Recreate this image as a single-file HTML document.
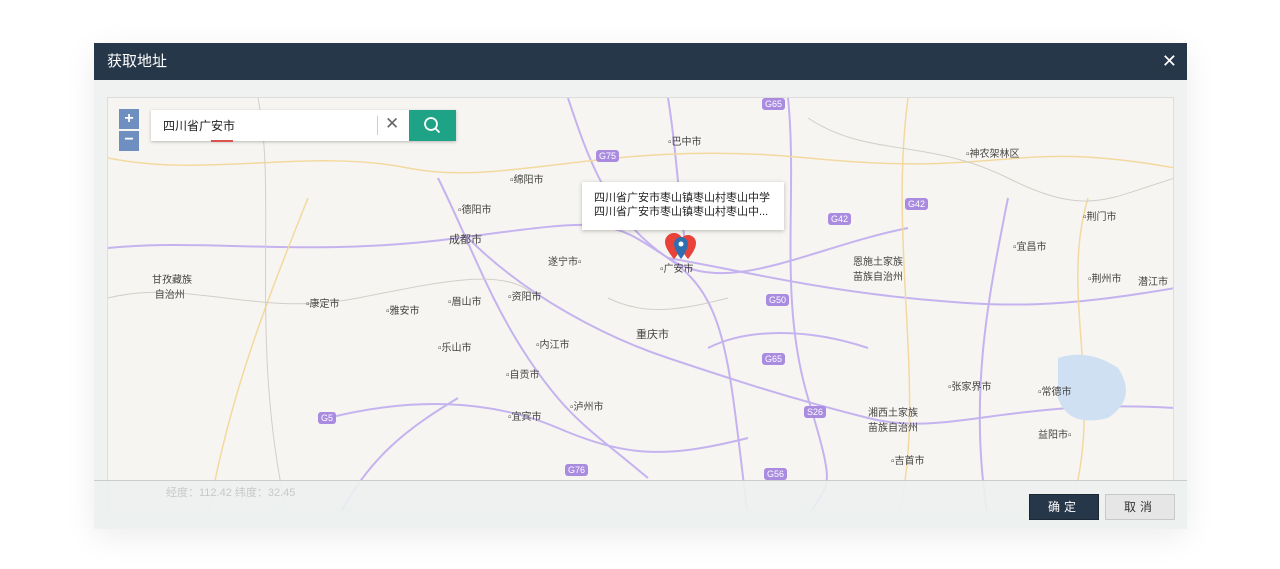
<!DOCTYPE html>
<html><head><meta charset="utf-8"><style>
body{margin:0;width:1280px;height:569px;background:#fff;font-family:"Liberation Sans","Noto Sans CJK SC",sans-serif;position:relative;overflow:hidden}
.dlg{position:absolute;left:94px;top:43px;width:1093px;height:485px;background:#f0f1f1;box-shadow:0 8px 30px rgba(0,0,0,.08)}
.hd{height:37px;background:#27374a;color:#fff;font-size:15px;line-height:37px;padding-left:13px;position:relative}
.x{position:absolute;right:10px;top:0;font-size:18px}
.map{position:absolute;left:13px;top:54px;width:1065px;height:412px;background:#f7f5f1;border:1px solid #ddd;overflow:hidden}
.l{position:absolute;font-size:10px;color:#444;white-space:nowrap}
.g{position:absolute;font-size:9px;color:#fff;background:#a98be0;border-radius:3px;padding:0 3px;line-height:12px}
.ft{position:absolute;left:0;top:437px;width:1093px;height:48px;background:rgba(236,241,239,.9);border-top:1px solid #ccc}
.b{position:absolute;top:13px;height:24px;width:68px;font-size:12px;text-align:center;line-height:24px;letter-spacing:4px}
</style></head><body>
<div class="dlg">
<div class="hd">获取地址<span class="x">✕</span></div>
<div class="map">
<svg width="1067" height="420" style="position:absolute;left:0;top:0" fill="none">
<g stroke="#c5b3ef" stroke-width="2">
<path d="M0 150 C100 140 200 160 350 140 S500 120 560 160 700 150 800 130 1067 120"/>
<path d="M330 80 C360 140 380 200 420 260 S480 330 540 380 560 420"/>
<path d="M460 0 C480 60 500 120 560 160 S620 260 640 420"/>
<path d="M560 160 C620 170 700 190 800 200 S950 210 1067 190"/>
<path d="M360 140 C420 200 500 240 560 260 S680 300 760 320 900 300 1067 310"/>
<path d="M220 320 C300 300 380 300 450 330 S560 360 640 340"/>
<path d="M560 0 C570 60 570 110 580 160"/>
<path d="M680 0 C690 100 670 200 700 300 S720 380 700 420"/>
<path d="M900 100 C880 200 860 300 880 420"/>
<path d="M230 420 C260 360 300 330 350 300"/>
<path d="M600 250 C640 230 700 230 760 250"/>
</g>
<g stroke="#f3d9a0" stroke-width="1.5">
<path d="M0 60 C100 80 200 50 300 70 S500 40 700 60 900 40 1067 70"/>
<path d="M100 420 C120 300 160 200 200 100"/>
<path d="M800 0 C780 150 820 300 790 420"/>
<path d="M980 100 C950 200 1000 300 960 420"/>
</g>
<g stroke="#d2cfca" stroke-width="1">
<path d="M0 200 C80 180 150 220 250 200 S400 170 430 200"/>
<path d="M150 0 C170 100 140 250 180 420"/>
<path d="M700 20 C760 60 820 40 900 80 S1000 100 1067 80"/>
<path d="M500 200 C540 220 580 210 620 200"/>
</g>
<path d="M950 260 q30 -10 60 10 q20 30 -10 50 q-40 10 -50 -20z" fill="#cfe0f3"/>
</svg>
<span class="l" style="left:341px;top:133px;font-size:11px">成都市</span>
<span class="l" style="left:44px;top:173px">甘孜藏族<br>&nbsp;自治州</span>
<span class="l" style="left:198px;top:197px">▫康定市</span>
<span class="l" style="left:278px;top:204px">▫雅安市</span>
<span class="l" style="left:340px;top:195px">▫眉山市</span>
<span class="l" style="left:400px;top:190px">▫资阳市</span>
<span class="l" style="left:330px;top:241px">▫乐山市</span>
<span class="l" style="left:428px;top:238px">▫内江市</span>
<span class="l" style="left:528px;top:228px;font-size:11px">重庆市</span>
<span class="l" style="left:398px;top:268px">▫自贡市</span>
<span class="l" style="left:400px;top:310px">▫宜宾市</span>
<span class="l" style="left:462px;top:300px">▫泸州市</span>
<span class="l" style="left:440px;top:155px">遂宁市▫</span>
<span class="l" style="left:552px;top:162px">▫广安市</span>
<span class="l" style="left:402px;top:73px">▫绵阳市</span>
<span class="l" style="left:350px;top:103px">▫德阳市</span>
<span class="l" style="left:560px;top:35px">▫巴中市</span>
<span class="l" style="left:745px;top:155px">恩施土家族<br>苗族自治州</span>
<span class="l" style="left:840px;top:280px">▫张家界市</span>
<span class="l" style="left:930px;top:285px">▫常德市</span>
<span class="l" style="left:760px;top:306px">湘西土家族<br>苗族自治州</span>
<span class="l" style="left:930px;top:328px">益阳市▫</span>
<span class="l" style="left:783px;top:354px">▫吉首市</span>
<span class="l" style="left:905px;top:140px">▫宜昌市</span>
<span class="l" style="left:975px;top:110px">▫荆门市</span>
<span class="l" style="left:980px;top:172px">▫荆州市</span>
<span class="l" style="left:1030px;top:175px">潜江市</span>
<span class="l" style="left:858px;top:47px">▫神农架林区</span>
<span class="g" style="left:488px;top:52px">G75</span>
<span class="g" style="left:654px;top:0px">G65</span>
<span class="g" style="left:720px;top:115px">G42</span>
<span class="g" style="left:797px;top:100px">G42</span>
<span class="g" style="left:658px;top:196px">G50</span>
<span class="g" style="left:654px;top:255px">G65</span>
<span class="g" style="left:696px;top:308px">S26</span>
<span class="g" style="left:210px;top:314px">G5</span>
<span class="g" style="left:457px;top:366px">G76</span>
<span class="g" style="left:656px;top:370px">G56</span>
<svg style="position:absolute;left:556px;top:133px" width="36" height="34"><path d="M10 2a9 9 0 0 1 9 9c0 7-9 17-9 17s-9-10-9-17a9 9 0 0 1 9-9z" fill="#e8423a"/><path d="M24 4a8 8 0 0 1 8 8c0 7-8 16-8 16s-8-9-8-16a8 8 0 0 1 8-8z" fill="#e8423a"/><path d="M17 6a7 7 0 0 1 7 7c0 6-7 15-7 15s-7-9-7-15a7 7 0 0 1 7-7z" fill="#2f6fb0"/><circle cx="17" cy="13" r="2.5" fill="#fff"/></svg>
<div style="position:absolute;left:474px;top:84px;width:202px;height:48px;background:#fff;box-shadow:0 1px 4px rgba(0,0,0,.25);font-size:11px;color:#222;padding:9px 0 0 12px;box-sizing:border-box;line-height:14px">四川省广安市枣山镇枣山村枣山中学<br>四川省广安市枣山镇枣山村枣山中...</div>
<div style="position:absolute;left:11px;top:11px;width:20px;height:20px;background:#6e8fc0;color:#fff;font-size:16px;text-align:center;line-height:19px;font-weight:bold">+</div>
<div style="position:absolute;left:11px;top:33px;width:20px;height:20px;background:#6e8fc0;color:#fff;font-size:16px;text-align:center;line-height:18px;font-weight:bold">−</div>
<div style="position:absolute;left:43px;top:12px;width:305px;height:31px;background:#fff;box-shadow:0 1px 3px rgba(0,0,0,.25)">
<span style="position:absolute;left:12px;top:7px;font-size:12px;color:#222">四川省广安市</span>
<div style="position:absolute;left:60px;bottom:-1px;width:22px;height:2px;background:#d9534f"></div>
<div style="position:absolute;left:226px;top:6px;width:1px;height:19px;background:#ccc"></div>
<span style="position:absolute;left:234px;top:4px;font-size:17px;color:#666">✕</span>
<div style="position:absolute;left:258px;top:0;width:47px;height:31px;background:#1fa386"><svg width="47" height="31"><circle cx="22" cy="14" r="6" stroke="#fff" stroke-width="1.8" fill="none"/><path d="M26.5 18.5l4 4" stroke="#fff" stroke-width="1.8"/></svg></div>
</div>
</div>
<div class="ft">
<span style="position:absolute;left:72px;top:3px;font-size:11px;color:#c8c8c8">经度：112.42 纬度：32.45</span>
<div class="b" style="left:935px;background:#27374a;color:#fff;border:1px solid #1a2633">确定</div>
<div class="b" style="left:1011px;background:#e6e6e6;color:#333;border:1px solid #c8c8c8">取消</div>
</div>
</div>
</body></html>
